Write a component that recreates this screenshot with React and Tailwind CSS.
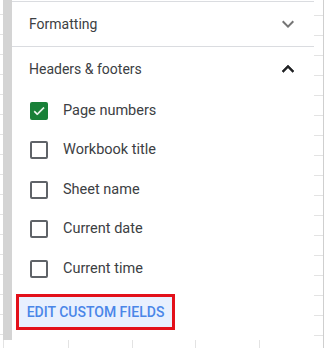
import React from "react";

const items = [
  { label: "Page numbers", checked: true },
  { label: "Workbook title", checked: false },
  { label: "Sheet name", checked: false },
  { label: "Current date", checked: false },
  { label: "Current time", checked: false },
];

function Checkbox({ checked }) {
  if (checked) {
    return (
      <div className="w-[18px] h-[18px] rounded-[2px] bg-[#188038] flex items-center justify-center">
        <svg width="14" height="14" viewBox="0 0 24 24">
          <path d="M9 16.17L4.83 12l-1.42 1.41L9 19 21 7l-1.41-1.41z" fill="#fff" stroke="#fff" strokeWidth="1" />
        </svg>
      </div>
    );
  }
  return <div className="w-[18px] h-[18px] rounded-[2px] border-2 border-[#5f6368]" />;
}

const ticks = Array.from({ length: 17 });

export default function App() {
  return (
    <div className="w-[324px] h-[348px] bg-white flex flex-col overflow-hidden font-['Roboto',sans-serif]">
      <div className="flex h-[340px]">
        <div className="w-[3px] flex flex-col">
          <div className="h-[15px] border-b border-[#e3e3e3] shrink-0" />
          {ticks.map((_, i) => (
            <div key={i} className="h-[20px] border-b border-[#e3e3e3] shrink-0" />
          ))}
        </div>
        <div className="w-[9px] bg-[#d4d4d4]" />
        <div className="w-[302px] flex flex-col bg-white">
          <div className="h-px mt-px bg-[#dadce0]" />
          <div className="h-[44px] flex items-center justify-between pl-[17px] pr-[14px]">
            <span className="text-[14px] text-[#3c4043]">Formatting</span>
            <svg width="24" height="24" viewBox="0 0 24 24">
              <path d="M16.59 8.59L12 13.17 7.41 8.59 6 10l6 6 6-6z" fill="#757575" />
            </svg>
          </div>
          <div className="h-px bg-[#dadce0]" />
          <div className="h-[44px] flex items-center justify-between pl-[17px] pr-[14px]">
            <span className="text-[14px] text-[#3c4043]">Headers &amp; footers</span>
            <svg width="24" height="24" viewBox="0 0 24 24">
              <path d="M12 8l-6 6 1.41 1.41L12 10.83l4.59 4.58L18 14z" fill="#202124" stroke="#202124" strokeWidth="0.6" />
            </svg>
          </div>
          {items.map((it) => (
            <div key={it.label} className="h-[39.5px] flex items-center pl-[18px] gap-[15px]">
              <Checkbox checked={it.checked} />
              <span className="text-[14.5px] text-[#3c4043]">{it.label}</span>
            </div>
          ))}
          <div className="mt-[5.5px] ml-[4px] w-[159px] h-[36px] border-[3px] border-[#e3101a] bg-[#e8f0fe] flex items-center justify-center">
            <span className="text-[14px] font-medium text-[#4a86e8]">EDIT CUSTOM FIELDS</span>
          </div>
        </div>
        <div className="w-[10px] flex flex-col border-r border-[#cfcfcf]">
          <div className="h-[16px] border-b border-[#e3e3e3] shrink-0" />
          {ticks.map((_, i) => (
            <div key={i} className="h-[20px] border-b border-[#e3e3e3] shrink-0" />
          ))}
        </div>
      </div>
      <div className="h-[8px] flex">
        <div className="w-[3px] shrink-0" />
        <div className="w-[65px] shrink-0 border-l border-[#e3e3e3]" />
        <div className="w-[64px] shrink-0 border-l border-[#e3e3e3]" />
        <div className="w-[63px] shrink-0 border-l border-[#e3e3e3]" />
        <div className="w-[64px] shrink-0 border-l border-[#e3e3e3]" />
        <div className="w-[64px] shrink-0 border-l border-[#e3e3e3]" />
        <div className="w-[1px] shrink-0 border-l border-[#cfcfcf]" />
      </div>
    </div>
  );
}
